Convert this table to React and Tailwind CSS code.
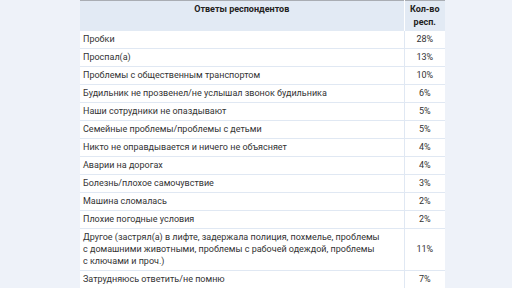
import React from "react";

const rows = [
  ["Пробки", "28%"],
  ["Проспал(а)", "13%"],
  ["Проблемы с общественным транспортом", "10%"],
  ["Будильник не прозвенел/не услышал звонок будильника", "6%"],
  ["Наши сотрудники не опаздывают", "5%"],
  ["Семейные проблемы/проблемы с детьми", "5%"],
  ["Никто не оправдывается и ничего не объясняет", "4%"],
  ["Аварии на дорогах", "4%"],
  ["Болезнь/плохое самочувствие", "3%"],
  ["Машина сломалась", "2%"],
  ["Плохие погодные условия", "2%"],
  [
    "Другое (застрял(а) в лифте, задержала полиция, похмелье, проблемы с\u00a0домашними животными, проблемы с\u00a0рабочей одеждой, проблемы с\u00a0ключами и проч.)",
    "11%",
  ],
  ["Затрудняюсь ответить/не помню", "7%"],
];

export default function App() {
  return (
    <div
      className="w-[512px] h-[288px] overflow-hidden bg-[#eef2f9] pl-[80px]"
      style={{ fontFamily: "Roboto, 'Liberation Sans', sans-serif" }}
    >
      <table className="w-[365px] border-collapse text-[9px] leading-[12px] text-[#333] bg-white border-t border-t-[#a9adb3] table-fixed">
        <colgroup>
          <col className="w-[324px]" />
          <col className="w-[41px]" />
        </colgroup>
        <thead>
          <tr className="bg-[#e2eaf4] h-[30px]">
            <th className="align-top text-center font-bold text-[#222] pt-[2px] px-1 leading-[13px] border-r border-white">
              Ответы респондентов
            </th>
            <th className="align-top text-center font-bold text-[#222] pt-[2px] px-1 leading-[13px]">
              Кол-во
              <br />
              респ.
            </th>
          </tr>
        </thead>
        <tbody>
          {rows.map(([label, value], i) => (
            <tr key={i} className="border-b border-[#e0e8f3]">
              <td className="py-[2.5px] pl-[3px] pr-[20px] border-r border-[#e0e8f3] align-middle">
                {label}
              </td>
              <td className="py-[2.5px] text-center align-middle">{value}</td>
            </tr>
          ))}
        </tbody>
      </table>
    </div>
  );
}
